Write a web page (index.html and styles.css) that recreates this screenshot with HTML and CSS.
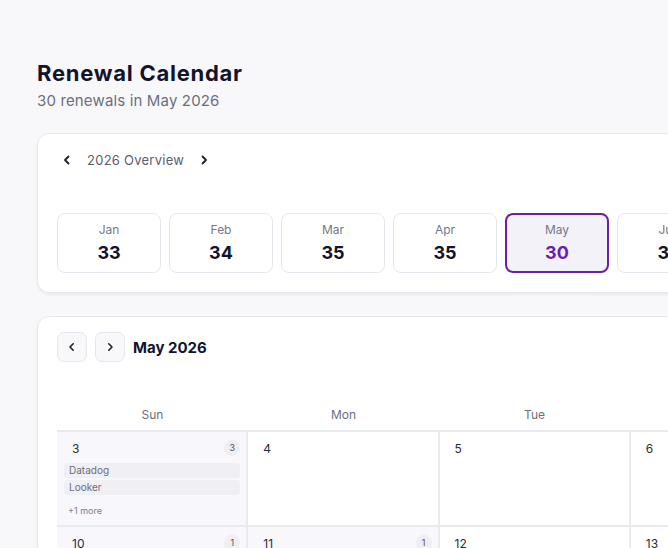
FILE: index.html
```html
<!DOCTYPE html>
<html>
  <head>
    <meta charset="utf-8">
    <title>Renewal Calendar</title>
    <link rel="stylesheet" href="styles.css">
  </head>
  <body>
    <div class="page">
      <h1 class="title">Renewal Calendar</h1>
      <p class="subtitle">30 renewals in May 2026</p>

      <section class="card overview">
        <div class="overview-head">
          <button class="chev" aria-label="Previous year">
            <svg width="10" height="10" viewBox="0 0 10 10"><path d="M6.5 1.5 3 5l3.5 3.5" fill="none" stroke="#1b1d2e" stroke-width="1.8" stroke-linecap="round" stroke-linejoin="round"/></svg>
          </button>
          <span class="overview-label">2026 Overview</span>
          <button class="chev" aria-label="Next year">
            <svg width="10" height="10" viewBox="0 0 10 10"><path d="M3.5 1.5 7 5 3.5 8.5" fill="none" stroke="#1b1d2e" stroke-width="1.8" stroke-linecap="round" stroke-linejoin="round"/></svg>
          </button>
        </div>
        <div class="months">
          <div class="month"><span class="month-name">Jan</span><span class="month-count">33</span></div>
          <div class="month"><span class="month-name">Feb</span><span class="month-count">34</span></div>
          <div class="month"><span class="month-name">Mar</span><span class="month-count">35</span></div>
          <div class="month"><span class="month-name">Apr</span><span class="month-count">35</span></div>
          <div class="month active"><span class="month-name">May</span><span class="month-count">30</span></div>
          <div class="month"><span class="month-name">Jun</span><span class="month-count">32</span></div>
          <div class="month"><span class="month-name">Jul</span><span class="month-count">31</span></div>
          <div class="month"><span class="month-name">Aug</span><span class="month-count">29</span></div>
          <div class="month"><span class="month-name">Sep</span><span class="month-count">34</span></div>
          <div class="month"><span class="month-name">Oct</span><span class="month-count">33</span></div>
          <div class="month"><span class="month-name">Nov</span><span class="month-count">28</span></div>
          <div class="month"><span class="month-name">Dec</span><span class="month-count">30</span></div>
        </div>
      </section>

      <section class="card calendar">
        <div class="cal-toolbar">
          <button class="nav-btn" aria-label="Previous month">
            <svg width="10" height="10" viewBox="0 0 10 10"><path d="M6.2 1.8 3 5l3.2 3.2" fill="none" stroke="#1b1d2e" stroke-width="1.6" stroke-linecap="round" stroke-linejoin="round"/></svg>
          </button>
          <button class="nav-btn" aria-label="Next month">
            <svg width="10" height="10" viewBox="0 0 10 10"><path d="M3.8 1.8 7 5 3.8 8.2" fill="none" stroke="#1b1d2e" stroke-width="1.6" stroke-linecap="round" stroke-linejoin="round"/></svg>
          </button>
          <h2 class="cal-title">May 2026</h2>
        </div>

        <div class="weekdays">
          <span>Sun</span><span>Mon</span><span>Tue</span><span>Wed</span><span>Thu</span><span>Fri</span><span>Sat</span>
        </div>

        <div class="grid">
          <div class="day has">
            <div class="day-head"><span class="day-num">3</span><span class="badge">3</span></div>
            <div class="chip">Datadog</div>
            <div class="chip">Looker</div>
            <div class="more">+1 more</div>
          </div>
          <div class="day"><div class="day-head"><span class="day-num">4</span></div></div>
          <div class="day"><div class="day-head"><span class="day-num">5</span></div></div>
          <div class="day"><div class="day-head"><span class="day-num">6</span></div></div>
          <div class="day"><div class="day-head"><span class="day-num">7</span></div></div>
          <div class="day"><div class="day-head"><span class="day-num">8</span></div></div>
          <div class="day"><div class="day-head"><span class="day-num">9</span></div></div>

          <div class="day has"><div class="day-head"><span class="day-num">10</span><span class="badge">1</span></div></div>
          <div class="day has"><div class="day-head"><span class="day-num">11</span><span class="badge">1</span></div></div>
          <div class="day"><div class="day-head"><span class="day-num">12</span></div></div>
          <div class="day"><div class="day-head"><span class="day-num">13</span></div></div>
          <div class="day"><div class="day-head"><span class="day-num">14</span></div></div>
          <div class="day"><div class="day-head"><span class="day-num">15</span></div></div>
          <div class="day"><div class="day-head"><span class="day-num">16</span></div></div>
        </div>
      </section>
    </div>
  </body>
</html>
```

FILE: styles.css
```css
html {
  overflow: hidden;
}

body {
  margin: 0;
  background-color: #f8f8fb;
  font-family: Inter, "Noto Sans", sans-serif;
  color: #11142a;
}

.page {
  width: 1377px;
  padding: 58px 37px 40px;
}

.title {
  margin: 0;
  font-size: 22px;
  line-height: 30px;
  font-weight: 700;
  letter-spacing: 0.75px;
}

.subtitle {
  margin: 2px 0 0;
  font-size: 15px;
  line-height: 22px;
  color: #6b6e80;
  letter-spacing: 0.15px;
}

.card {
  background-color: #ffffff;
  border: 1px solid #e7e7ee;
  border-radius: 12px;
  box-shadow: 0 2px 3px rgba(20, 20, 50, 0.06);
}

/* year overview */

.overview {
  margin-top: 21px;
  padding: 13px 19px 19px;
}

.overview-head {
  display: flex;
  align-items: center;
  gap: 10px;
  height: 26px;
  margin-bottom: 40px;
}

.chev {
  display: flex;
  align-items: center;
  justify-content: center;
  width: 20px;
  height: 20px;
  padding: 0;
  border: none;
  background: none;
}

.overview-label {
  font-size: 13px;
  color: #5b5e6e;
  letter-spacing: 0.25px;
}

.months {
  display: flex;
  gap: 8px;
}

.month {
  flex: 0 0 104px;
  height: 60px;
  box-sizing: border-box;
  border: 1px solid #e6e6ee;
  border-radius: 8px;
  display: flex;
  flex-direction: column;
  align-items: center;
  padding-top: 8px;
}

.month-name {
  font-size: 12px;
  line-height: 16px;
  color: #747788;
}

.month-count {
  font-size: 18px;
  line-height: 24px;
  font-weight: 700;
  margin-top: 3px;
}

.month.active {
  border: 2px solid #6a1fa6;
  background-color: #f4f2f9;
  padding-top: 7px;
}

.month.active .month-count {
  color: #6a1fa6;
}

/* month calendar */

.calendar {
  margin-top: 23px;
  padding: 15px 19px 0;
}

.cal-toolbar {
  display: flex;
  align-items: center;
  gap: 8px;
}

.nav-btn {
  display: flex;
  align-items: center;
  justify-content: center;
  width: 30px;
  height: 30px;
  padding: 0;
  border: 1px solid #e6e6ee;
  border-radius: 7px;
  background-color: #f8f8fb;
}

.cal-title {
  margin: 0;
  font-size: 15px;
  font-weight: 700;
}

.weekdays {
  display: grid;
  grid-template-columns: repeat(7, 1fr);
  margin-top: 36px;
  height: 32px;
  align-items: center;
  text-align: center;
  font-size: 12px;
  color: #6b6e7b;
}

.grid {
  display: grid;
  grid-template-columns: repeat(7, 1fr);
  grid-auto-rows: 93px;
  gap: 2px;
  border-top: 2px solid #e9e9f0;
  background-color: #e9e9f0;
}

.day {
  background-color: #ffffff;
  padding: 7px 6px 0 7px;
}

.day.has {
  background-color: #f8f7fc;
}

.day-head {
  display: flex;
  justify-content: space-between;
  align-items: center;
  height: 18px;
  padding-left: 8px;
  margin-bottom: 6px;
}

.day-num {
  font-size: 12px;
  color: #2a2c3b;
}

.badge {
  width: 16px;
  height: 16px;
  border-radius: 50%;
  background-color: #eeeef3;
  font-size: 9px;
  line-height: 16px;
  text-align: center;
  color: #4b4e5e;
}

.chip {
  height: 15px;
  margin-bottom: 2px;
  padding-left: 5px;
  border-radius: 4px;
  background-color: #efeff4;
  font-size: 10px;
  line-height: 15px;
  color: #6b6e7b;
}

.more {
  margin-top: 9px;
  padding-left: 4px;
  font-size: 9px;
  line-height: 14px;
  color: #7b7e8c;
}
```
